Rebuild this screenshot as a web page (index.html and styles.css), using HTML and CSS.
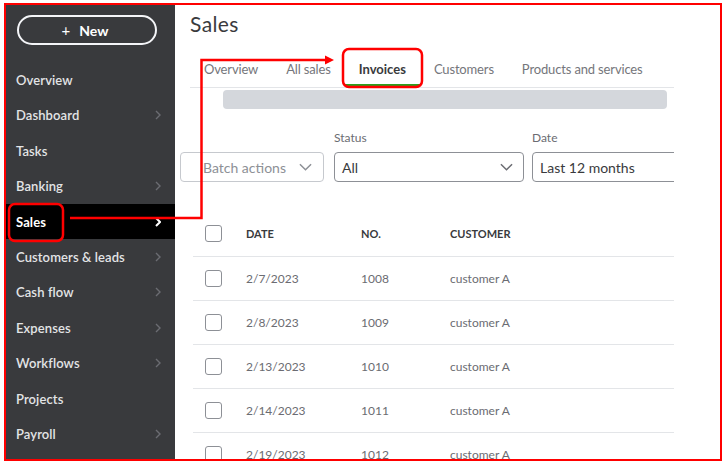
FILE: index.html
```html
<!DOCTYPE html>
<html>
<head>
<meta charset="utf-8">
<link rel="stylesheet" href="styles.css">
</head>
<body>
<div class="frame">
  <aside class="sidebar">
    <button class="new-btn"><span class="plus">+</span>New</button>
    <nav class="nav">
      <div class="nav-item">Overview</div>
      <div class="nav-item">Dashboard<svg class="chev" viewBox="0 0 6 10"><path d="M1 1l4 4-4 4"/></svg></div>
      <div class="nav-item">Tasks</div>
      <div class="nav-item">Banking<svg class="chev" viewBox="0 0 6 10"><path d="M1 1l4 4-4 4"/></svg></div>
      <div class="nav-item active">Sales<svg class="chev" viewBox="0 0 6 10"><path d="M1 1l4 4-4 4"/></svg></div>
      <div class="nav-item">Customers &amp; leads<svg class="chev" viewBox="0 0 6 10"><path d="M1 1l4 4-4 4"/></svg></div>
      <div class="nav-item">Cash flow<svg class="chev" viewBox="0 0 6 10"><path d="M1 1l4 4-4 4"/></svg></div>
      <div class="nav-item">Expenses<svg class="chev" viewBox="0 0 6 10"><path d="M1 1l4 4-4 4"/></svg></div>
      <div class="nav-item">Workflows<svg class="chev" viewBox="0 0 6 10"><path d="M1 1l4 4-4 4"/></svg></div>
      <div class="nav-item">Projects</div>
      <div class="nav-item">Payroll<svg class="chev" viewBox="0 0 6 10"><path d="M1 1l4 4-4 4"/></svg></div>
    </nav>
  </aside>
  <main class="main">
    <div class="view">
      <h1 class="title">Sales</h1>
      <div class="tabs">
        <div class="tab">Overview</div>
        <div class="tab">All sales</div>
        <div class="tab active">Invoices</div>
        <div class="tab">Customers</div>
        <div class="tab">Products and services</div>
      </div>
      <div class="loading-bar"></div>
      <div class="filters">
        <div class="field batch">
          <div class="label">&nbsp;</div>
          <div class="select muted"><span>Batch actions</span><svg class="dd" viewBox="0 0 14 8"><path d="M1 1l6 6 6-6"/></svg></div>
        </div>
        <div class="field status">
          <div class="label">Status</div>
          <div class="select"><span>All</span><svg class="dd" viewBox="0 0 14 8"><path d="M1 1l6 6 6-6"/></svg></div>
        </div>
        <div class="field date">
          <div class="label">Date</div>
          <div class="select open-right"><span>Last 12 months</span></div>
        </div>
      </div>
      <div class="table">
        <div class="row head">
          <div class="c-check"><span class="box"></span></div>
          <div class="c-date">DATE</div>
          <div class="c-no">NO.</div>
          <div class="c-cust">CUSTOMER</div>
        </div>
        <div class="row">
          <div class="c-check"><span class="box"></span></div>
          <div class="c-date">2/7/2023</div>
          <div class="c-no">1008</div>
          <div class="c-cust">customer A</div>
        </div>
        <div class="row">
          <div class="c-check"><span class="box"></span></div>
          <div class="c-date">2/8/2023</div>
          <div class="c-no">1009</div>
          <div class="c-cust">customer A</div>
        </div>
        <div class="row">
          <div class="c-check"><span class="box"></span></div>
          <div class="c-date">2/13/2023</div>
          <div class="c-no">1010</div>
          <div class="c-cust">customer A</div>
        </div>
        <div class="row">
          <div class="c-check"><span class="box"></span></div>
          <div class="c-date">2/14/2023</div>
          <div class="c-no">1011</div>
          <div class="c-cust">customer A</div>
        </div>
        <div class="row">
          <div class="c-check"><span class="box"></span></div>
          <div class="c-date">2/19/2023</div>
          <div class="c-no">1012</div>
          <div class="c-cust">customer A</div>
        </div>
      </div>
    </div>
  </main>
</div>
<svg class="annot" width="725" height="464" viewBox="0 0 725 464">
  <rect x="9" y="204" width="54" height="37" rx="6" ry="6" fill="none" stroke="#f00" stroke-width="2.5"/>
  <rect x="343" y="49" width="79" height="38" rx="6" ry="6" fill="none" stroke="#f00" stroke-width="2.5"/>
  <path d="M70 218 H201.5 V60 H326" fill="none" stroke="#f00" stroke-width="2.5"/>
  <path d="M325 55.5 L334 60 L325 64.5 Z" fill="#f00"/>
</svg>
</body>
</html>
```

FILE: styles.css
```css
* { box-sizing: border-box; }
html, body { margin: 0; padding: 0; background: #fff; }
body {
  width: 725px;
  height: 464px;
  overflow: hidden;
  position: relative;
  font-family: "Lato", "Open Sans", sans-serif;
}
.frame {
  margin: 3px 0 0 4px;
  width: 718px;
  height: 458px;
  border: 2px solid #f00;
  display: flex;
  overflow: hidden;
}
.sidebar {
  width: 169px;
  flex: none;
  background: #393a3d;
  padding-top: 10px;
  display: flex;
  flex-direction: column;
}
.new-btn {
  margin-left: 11px;
  width: 140px;
  height: 30px;
  border: 2px solid #f4f5f8;
  border-radius: 15px;
  background: transparent;
  color: #fff;
  font-family: "Lato", sans-serif;
  font-weight: 700;
  font-size: 14px;
  display: flex;
  align-items: center;
  justify-content: center;
  padding: 0;
}
.plus { font-weight: 400; font-size: 15px; margin-right: 9px; margin-left: -4px; }
.nav { margin-top: 17.3px; display: flex; flex-direction: column; }
.nav-item {
  height: 35.4px;
  display: flex;
  align-items: center;
  justify-content: space-between;
  padding: 0 14px 0 10px;
  color: #e3e4e6;
  font-size: 13px;
  font-weight: 600;
  letter-spacing: 0.1px;
}
.nav-item.active { background: #000; color: #fff; font-weight: 700; }
.chev { width: 6px; height: 10px; fill: none; stroke: #6b6c72; stroke-width: 1.4; }
.nav-item.active .chev { stroke: #fff; stroke-width: 2; }
.main { flex: 1; position: relative; }
.view { width: 499px; overflow: hidden; height: 100%; padding-top: 5px; }
.title {
  margin: 0 0 0 15px;
  font-size: 21px;
  line-height: 28px;
  font-weight: 400;
  color: #393a3d;
  letter-spacing: 0.4px;
}
.tabs {
  margin: 13px 0 0 15px;
  width: 484px;
  display: flex;
  border-bottom: 1.5px solid #e3e5e8;
  height: 37px;
}
.tab {
  padding: 0 14px;
  height: 36px;
  line-height: 36px;
  font-size: 13px;
  color: #75767b;
  letter-spacing: -0.15px;
}
.tab.active { color: #393a3d; font-weight: 700; box-shadow: inset 0 -3px 0 #2ca01c; letter-spacing: 0; }
.loading-bar {
  margin: 2px 0 0 48px;
  width: 444px;
  height: 19px;
  background: #d4d7dc;
  border-radius: 4px;
}
.filters { display: flex; margin: 21px 0 0 5px; }
.field { display: flex; flex-direction: column; flex: none; }
.label { font-size: 12px; line-height: 16px; height: 16px; color: #6b6c72; margin-bottom: 6px; }
.select {
  height: 30px;
  border: 1px solid #8d9096;
  border-radius: 4px;
  display: flex;
  align-items: center;
  justify-content: space-between;
  padding: 0 10px 0 7px;
  font-size: 14px;
  color: #393a3d;
}
.select.muted { border-color: #c6c9ce; color: #8d9096; padding-left: 22px; padding-right: 11px; }
.batch .select { width: 144px; }
.status { margin-left: 10px; }
.status .select { width: 190px; }
.date { margin-left: 8px; }
.date .select { width: 170px; }
.dd { width: 13px; height: 8px; fill: none; stroke: #6b6c72; stroke-width: 1.6; }
.muted .dd { stroke: #8d9096; }
.table { margin: 31px 0 0 18px; width: 481px; }
.row {
  display: flex;
  align-items: center;
  height: 44px;
  border-bottom: 1px solid #e3e5e8;
  font-size: 12px;
  color: #6b6c72;
}
.row.head { color: #393a3d; font-weight: 700; font-size: 11px; padding-bottom: 3px; }
.c-check { width: 53px; padding-left: 12px; display: flex; }
.box { width: 17px; height: 17px; border: 1.5px solid #8d9096; border-radius: 3px; }
.c-date { width: 115px; }
.c-no { width: 89px; }
.annot { position: absolute; left: 0; top: 0; pointer-events: none; }
```
